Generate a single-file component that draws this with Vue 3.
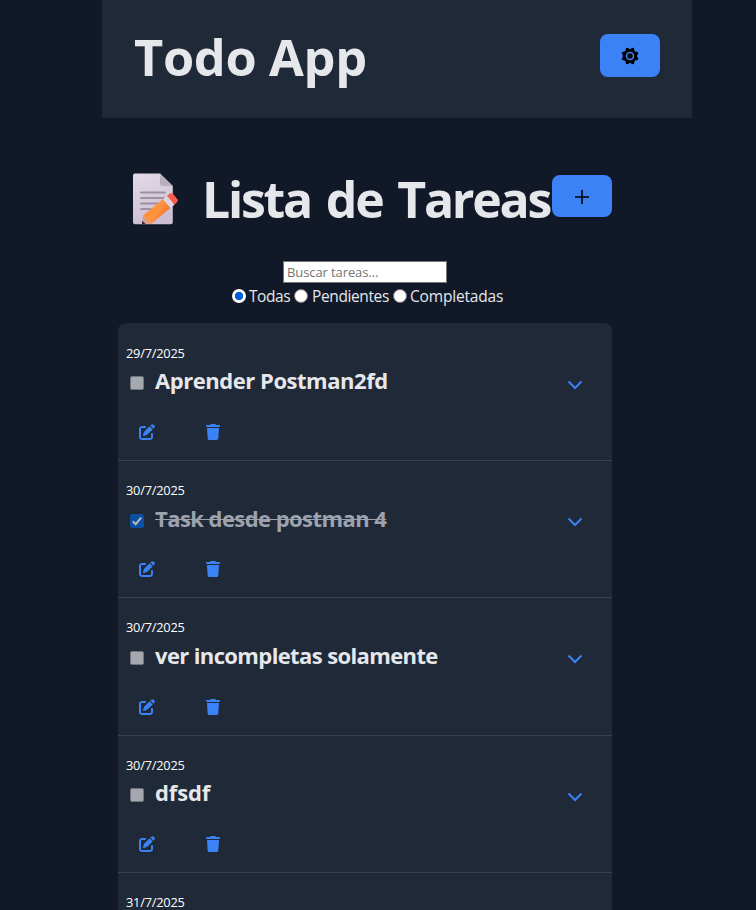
<script setup>
import { ref } from 'vue'

const filter = ref('all')
const filters = [
  { value: 'all', label: 'Todas' },
  { value: 'pending', label: 'Pendientes' },
  { value: 'done', label: 'Completadas' },
]
const tasks = ref([
  { id: 1, date: '29/7/2025', title: 'Aprender Postman2fd', done: false },
  { id: 2, date: '30/7/2025', title: 'Task desde postman 4', done: true },
  { id: 3, date: '30/7/2025', title: 'ver incompletas solamente', done: false },
  { id: 4, date: '30/7/2025', title: 'dfsdf', done: false },
  { id: 5, date: '31/7/2025', title: '', done: false },
])
</script>

<template>
  <div class="app">
    <header class="header">
      <h1 class="brand">Todo App</h1>
      <button class="btn" aria-label="Tema">
        <svg width="18" height="18" viewBox="0 0 18 18">
          <path fill="#000" fill-rule="evenodd" d="M5.200 .8 7 1 9 2.200 11 1 12.800 .8 13.700 4.300 17.200 5.200 17 7 15.800 9 17 11 17.200 12.800 13.700 13.700 12.800 17.200 11 17 9 15.800 7 17 5.200 17.200 4.300 13.700 .8 12.800 1 11 2.200 9 1 7 .8 5.200 4.300 4.300zM9 4.700A4.300 4.300 0 1 0 9 13.300 4.300 4.300 0 1 0 9 4.700z" />
          <circle cx="9" cy="9" r="2.700" />
        </svg>
      </button>
    </header>

    <main class="main">
      <div class="title-row">
        <svg class="memo" width="48" height="54" viewBox="0 0 48 54">
          <defs>
            <linearGradient id="paper" x1="0" y1="0" x2="0.3" y2="1">
              <stop offset="0" stop-color="#e3dbe8" />
              <stop offset="1" stop-color="#cdbfd2" />
            </linearGradient>
            <linearGradient id="pencil" x1="0" y1="0.2" x2="1" y2="0.8">
              <stop offset="0" stop-color="#ff8a35" />
              <stop offset="0.5" stop-color="#ff9440" />
              <stop offset="1" stop-color="#f4602a" />
            </linearGradient>
          </defs>
          <path d="M3 1.500H28L40.800 14V50.300a2 2 0 0 1-2 2H3a2 2 0 0 1-2-2V3.500a2 2 0 0 1 2-2z" fill="url(#paper)" />
          <path d="M28 1.500 40.800 14H30a2 2 0 0 1-2-2z" fill="#b9b0bd" />
          <path d="M9 20.500H33M9 26H33M9 31.500H29M9 37H24" stroke="#9b91a3" stroke-width="1.800" stroke-linecap="round" />
          <path d="M11 43.500 10 52 19.500 51.500z" fill="#d9a08c" />
          <path d="M10.300 48.800 10 52 13.500 51.900z" fill="#4a1738" />
          <path d="M11 43.500 31 27 38.500 36 19 52z" fill="url(#pencil)" />
          <path d="M31 27 35 23.700 42.500 32.700 38.500 36z" fill="#ddd4e3" />
          <path d="M35 23.700 38 21.400Q39.700 20.200 41 21.800L45.400 27.200Q46.500 28.700 45.200 30L42.500 32.700z" fill="#fb5d4e" />
        </svg>
        <h1 class="heading">Lista de Tareas</h1>
        <button class="btn" aria-label="Agregar">
          <svg width="16" height="16" viewBox="0 0 16 16">
            <path d="M8 1V15M1 8H15" stroke="#000" stroke-width="1.600" />
          </svg>
        </button>
      </div>

      <div class="search-area">
        <input class="search" type="text" placeholder="Buscar tareas..." />
        <div class="filters">
          <label v-for="f in filters" :key="f.value" class="filter" :class="f.value">
            <input v-model="filter" type="radio" name="filter" class="radio" :value="f.value" />
            <span>{{ f.label }}</span>
          </label>
        </div>
      </div>

      <ul class="list">
        <li v-for="task in tasks" :key="task.id" class="item">
          <div class="date">{{ task.date }}</div>
          <div class="task-row">
            <span class="check" :class="{ checked: task.done }">
              <svg v-if="task.done" width="14" height="14" viewBox="0 0 13 13">
                <path d="M2.600 6.800 5.200 9.400 10.400 3.300" fill="none" stroke="#b4b8bf" stroke-width="1.900" />
              </svg>
            </span>
            <h2 class="name" :class="[{ done: task.done }, 'name-' + task.id]">{{ task.title }}</h2>
            <svg class="chevron" width="16" height="10" viewBox="0 0 16 10">
              <path d="M1.500 1.500 8 8 14.500 1.500" fill="none" stroke="#3b82f6" stroke-width="2" />
            </svg>
          </div>
          <div class="actions">
            <svg width="16" height="16" viewBox="0 0 512 512" fill="#3b82f6">
              <path d="M471.600 21.700c-21.900-21.900-57.300-21.900-79.200 0L362.300 51.700l97.900 97.900 30.100-30.100c21.900-21.900 21.900-57.300 0-79.200L471.600 21.700zm-299.200 220c-6.100 6.100-10.800 13.600-13.500 21.900l-29.600 88.800c-2.900 8.600-.6 18.100 5.800 24.600s15.900 8.700 24.600 5.800l88.800-29.600c8.200-2.700 15.700-7.400 21.900-13.500L437.700 172.300 339.700 74.300 172.400 241.700zM96 64C43 64 0 107 0 160V416c0 53 43 96 96 96H352c53 0 96-43 96-96V320c0-17.700-14.300-32-32-32s-32 14.300-32 32v96c0 17.700-14.300 32-32 32H96c-17.700 0-32-14.300-32-32V160c0-17.700 14.300-32 32-32h96c17.700 0 32-14.300 32-32s-14.300-32-32-32H96z" />
            </svg>
            <svg class="trash" width="14" height="16" viewBox="0 0 448 512" fill="#3b82f6">
              <path d="M135.200 17.700L128 32H32C14.300 32 0 46.300 0 64S14.300 96 32 96H416c17.700 0 32-14.300 32-32s-14.300-32-32-32H320l-7.200-14.300C307.400 6.800 296.300 0 284.200 0H163.800c-12.100 0-23.200 6.800-28.600 17.700zM416 128H32L53.200 467c1.600 25.300 22.600 45 47.900 45H346.900c25.300 0 46.300-19.700 47.900-45L416 128z" />
            </svg>
          </div>
        </li>
      </ul>
    </main>
  </div>
</template>

<style>
body {
  background: #111827;
}
</style>

<style scoped>
.app {
  box-sizing: border-box;
  width: 590px;
  height: 910px;
  margin-left: 102px;
  overflow: hidden;
  font-family: "Open Sans", "Noto Sans", sans-serif;
  color: #e5e7eb;
}
.header {
  box-sizing: border-box;
  display: flex;
  align-items: center;
  justify-content: space-between;
  height: 118px;
  padding: 0 32px 7px;
  background: #1f2937;
}
h1,
h2 {
  margin: 0;
  white-space: nowrap;
}
.brand,
.heading {
  font-size: 50.5px;
  line-height: 56px;
  font-weight: 700;
}
.brand {
  padding-top: 3px;
  letter-spacing: -0.35px;
}
.btn {
  display: flex;
  align-items: center;
  justify-content: center;
  flex: none;
  width: 60px;
  height: 43px;
  padding: 0;
  border: 0;
  border-radius: 8px;
  background: #3b82f6;
}
.main {
  width: 494px;
  margin-left: 16px;
}
.title-row {
  display: flex;
  height: 143px;
  padding-top: 54px;
  box-sizing: border-box;
}
.title-row .btn {
  height: 42px;
  margin-top: 3px;
  margin-left: auto;
  padding-top: 2px;
}
.memo {
  flex: none;
  margin-left: 14px;
}
.heading {
  width: 350px;
  margin-top: -1px;
  margin-left: 22px;
  font-size: 50px;
  letter-spacing: -2.25px;
  word-spacing: 4px;
}
.search-area {
  display: flex;
  flex-direction: column;
  align-items: center;
  height: 62px;
}
.search {
  box-sizing: border-box;
  width: 164px;
  height: 22px;
  padding: 1px 3px;
  border: 1px solid #767676;
  background: #fff;
  font: 13px "Open Sans", sans-serif;
  letter-spacing: -0.1px;
}
.search::placeholder {
  color: #757575;
}
.filters {
  display: flex;
  align-self: flex-start;
  margin-top: 1px;
  padding-left: 114px;
  font-size: 15.5px;
  letter-spacing: -0.25px;
  line-height: 24px;
}
.filter {
  display: flex;
  align-items: center;
  white-space: nowrap;
}
.radio {
  flex: none;
  appearance: none;
  box-sizing: border-box;
  width: 14px;
  height: 14px;
  margin: 0 3px 0 0;
  border: 1px solid #767676;
  border-radius: 50%;
  background: #fff;
}
.radio:checked {
  border: 2px solid #fff;
  background: radial-gradient(circle, #005fd8 0 3.8px, #fff 4.5px);
}
.filter.all {
  width: 62px;
  letter-spacing: -0.45px;
}
.filter.pending {
  width: 99px;
  letter-spacing: -0.38px;
}
.filter.pending .radio {
  margin-right: 4px;
}
.filter.done {
  letter-spacing: -0.18px;
}
.list {
  margin: 0;
  padding: 0.6px 0 0;
  list-style: none;
  background: #1f2937;
  border-radius: 8px 8px 0 0;
}
.item {
  box-sizing: border-box;
  height: 137.33px;
  padding: 18.2px 8px 0;
  border-bottom: 1px solid #374151;
}
.date {
  height: 23px;
  font-size: 12.8px;
  line-height: 22px;
  letter-spacing: -0.22px;
  color: #fff;
}
.task-row {
  display: flex;
  align-items: center;
  height: 34px;
  padding: 0 21px 0 4px;
}
.check {
  box-sizing: border-box;
  flex: none;
  width: 14px;
  height: 14px;
  margin-top: 3px;
  border: 1px solid #70757e;
  border-radius: 2px;
  background: #a5a8af;
}
.check.checked {
  border: 0;
  background: #0b4ea2;
}
.check svg {
  display: block;
}
.name {
  margin-top: -3px;
  margin-left: 11px;
  font-size: 22px;
  line-height: 30px;
  font-weight: 700;
  letter-spacing: -0.46px;
}
.name-2 {
  letter-spacing: -0.56px;
}
.name-3 {
  letter-spacing: -0.62px;
}
.name-4 {
  letter-spacing: -0.15px;
}
.name.done {
  color: #9ca3af;
  text-decoration: line-through;
  text-decoration-thickness: 1px;
}
.chevron {
  margin-left: auto;
  margin-top: 6px;
}
.actions {
  display: flex;
  align-items: center;
  padding: 25.2px 0 0 13px;
}
.trash {
  margin-left: 51px;
}
</style>
